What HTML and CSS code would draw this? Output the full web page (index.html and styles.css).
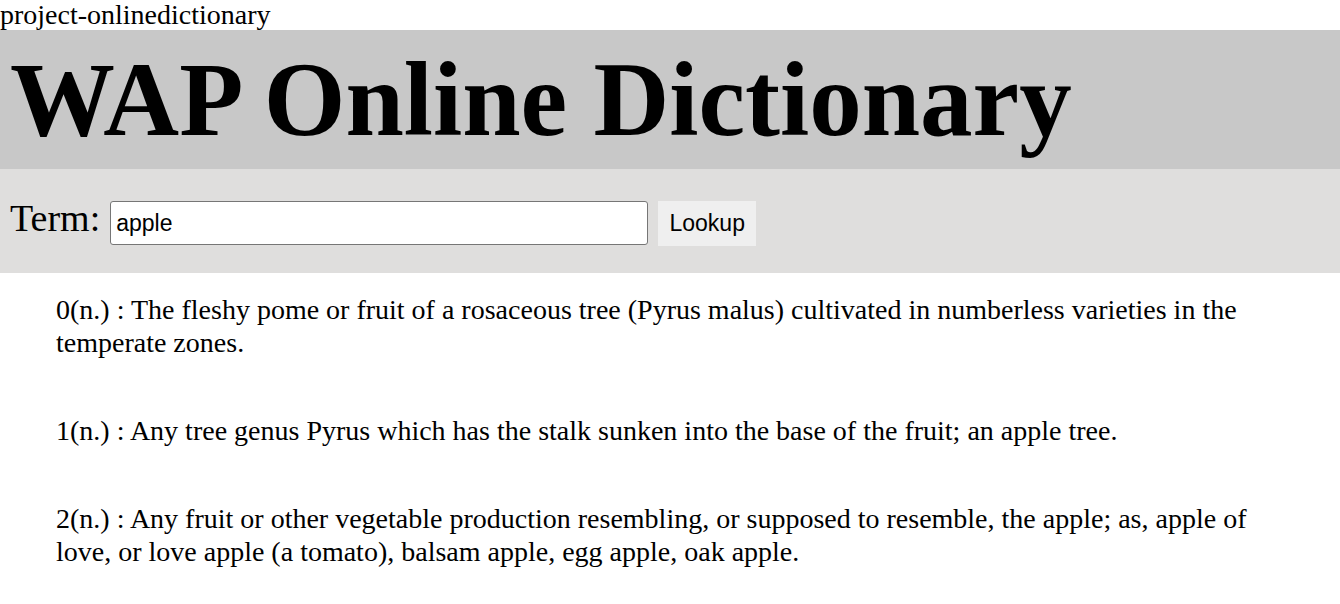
FILE: index.html
```html
<!DOCTYPE html>
<html>
<head>
<meta charset="utf-8">
<title>WAP Online Dictionary</title>
<link rel="stylesheet" href="styles.css">
</head>
<body>
<div class="project">project-onlinedictionary</div>
<header class="banner">
  <h1 class="title">WAP Online Dictionary</h1>
</header>
<form class="search">
  <label class="term-label" for="term">Term:</label>
  <input class="term-input" id="term" type="text" value="apple">
  <button class="lookup" type="button">Lookup</button>
</form>
<ul class="defs">
  <li class="def">0(n.) : The fleshy pome or fruit of a rosaceous tree (Pyrus malus) cultivated in numberless varieties in the temperate zones.</li>
  <li class="def">1(n.) : Any tree genus Pyrus which has the stalk sunken into the base of the fruit; an apple tree.</li>
  <li class="def">2(n.) : Any fruit or other vegetable production resembling, or supposed to resemble, the apple; as, apple of love, or love apple (a tomato), balsam apple, egg apple, oak apple.</li>
</ul>
</body>
</html>
```
FILE: styles.css
```css
html, body {
  margin: 0;
  padding: 0;
  background: #fff;
  color: #000;
  font-family: "Liberation Serif", "Times New Roman", serif;
}
.project {
  font-size: 28px;
  line-height: 30px;
  height: 30px;
  white-space: nowrap;
}
.banner {
  background: #c8c8c8;
  height: 139px;
  display: flex;
  align-items: center;
  padding: 0 15px 0 10px;
  box-sizing: border-box;
}
.title {
  margin: 0;
  font-size: 105px;
  font-weight: bold;
  line-height: 1;
  white-space: nowrap;
}
.search {
  margin: 0;
  background: #dfdedd;
  height: 104px;
  box-sizing: border-box;
  display: flex;
  align-items: center;
  padding: 4px 10px 0;
}
.term-label {
  font-size: 38px;
  margin: 0 10px 10px 0;
}
.term-input {
  width: 538px;
  height: 44px;
  box-sizing: border-box;
  border: 1px solid #767676;
  border-radius: 3px;
  font-family: "Liberation Sans", Arial, sans-serif;
  font-size: 23px;
  padding: 0 5px;
  margin: 0 10px 0 0;
}
.lookup {
  height: 45px;
  width: 98px;
  border: none;
  background: #efefef;
  font-family: "Liberation Sans", Arial, sans-serif;
  font-size: 23px;
  color: #000;
  padding: 0;
  margin-top: 1px;
}
.defs {
  list-style: none;
  margin: 0;
  padding: 20px 56px;
}
.def {
  font-size: 28px;
  line-height: 33px;
  margin-bottom: 55px;
}
```
